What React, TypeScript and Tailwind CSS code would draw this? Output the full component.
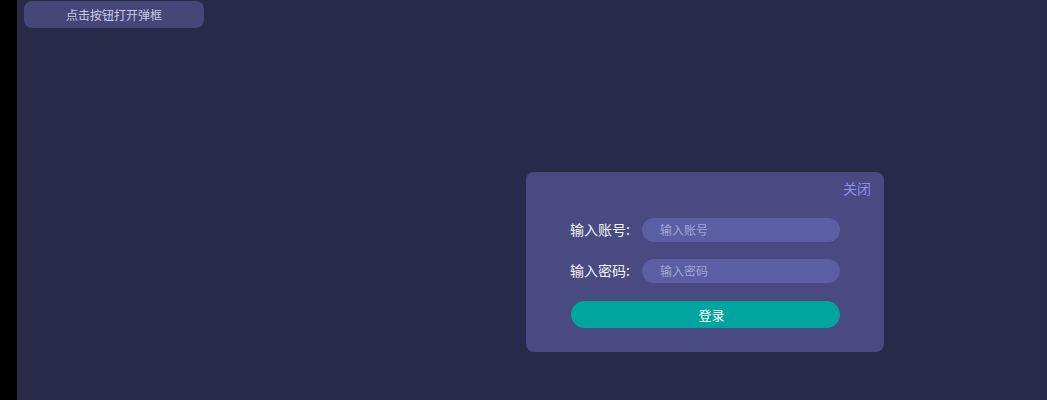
import React from "react";

export default function App() {
  const font = { fontFamily: '"Noto Sans CJK SC", "Noto Sans", sans-serif' };
  return (
    <div className="flex h-[400px] w-full overflow-hidden" style={font}>
      <div className="w-[17px] shrink-0 bg-black" />
      <div className="relative flex-1 bg-[#282a49]">
        <button className="ml-[7px] mt-[1px] flex h-[27px] w-[180px] items-center justify-center rounded-[8px] bg-[#454778] text-[12px] text-[#c9cae3]">
          点击按钮打开弹框
        </button>
        <div className="absolute left-[509px] top-[172px] flex h-[180px] w-[358px] flex-col rounded-[8px] bg-[#484a81] pl-[44px] pr-[13px] pt-[6px]">
          <div className="flex justify-end">
            <span className="text-[14px] leading-[20px] text-[#8e91e6]">关闭</span>
          </div>
          <div className="mt-[20px] flex items-center">
            <span className="mb-[3px] w-[72px] text-[14px] leading-[20px] text-[#f2f2f8]">输入账号:</span>
            <div className="flex h-[24px] w-[198px] items-center rounded-full bg-[#5b5ea3] pl-[18px] text-[12px] text-[#a3a6d6]">
              输入账号
            </div>
          </div>
          <div className="mt-[17px] flex items-center">
            <span className="mb-[3px] w-[72px] text-[14px] leading-[20px] text-[#f2f2f8]">输入密码:</span>
            <div className="flex h-[24px] w-[198px] items-center rounded-full bg-[#5b5ea3] pl-[18px] text-[12px] text-[#a3a6d6]">
              输入密码
            </div>
          </div>
          <button className="ml-[1px] mt-[18px] flex h-[27px] w-[269px] items-center justify-center rounded-full bg-[#00a59f] pl-[12px] text-[13px] text-white">
            登录
          </button>
        </div>
      </div>
    </div>
  );
}
